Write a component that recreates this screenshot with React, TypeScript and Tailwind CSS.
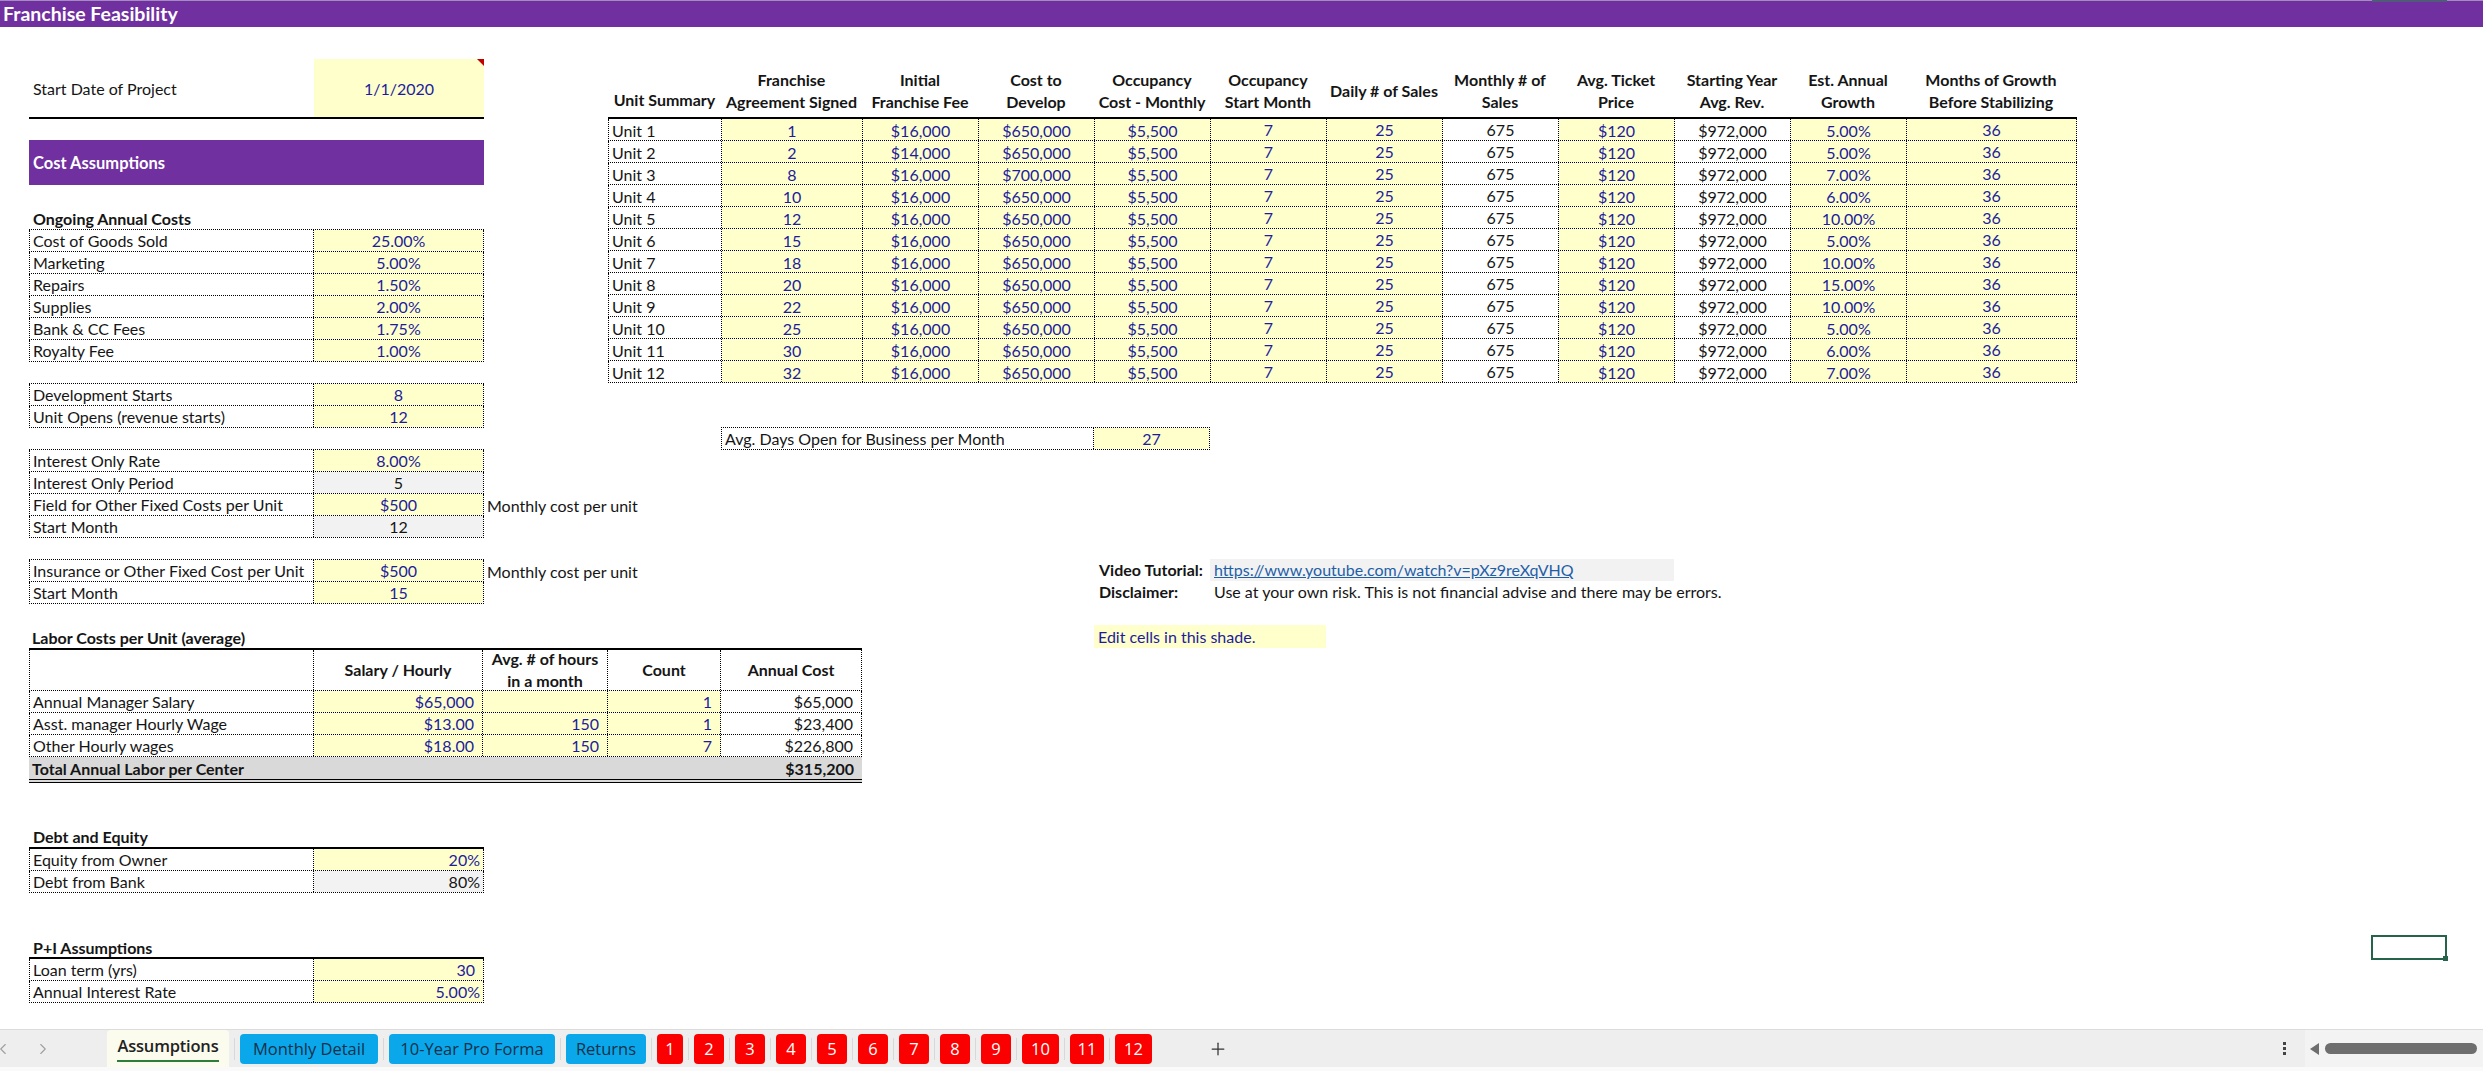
import type { ReactNode } from 'react'
import { ChevronLeft, ChevronRight, Plus } from 'lucide-react'

const blue = 'text-[#1c1c9c]'

function Row({ label, value, kind = 'input', align = 'center', note }: { label: string; value: ReactNode; kind?: 'input' | 'calc'; align?: 'center' | 'right'; note?: string }) {
  return (
    <div className="flex h-[22px]">
      <div className="flex w-[455px] shrink-0 border-x border-b border-dotted border-black">
        <div className="flex w-[284px] shrink-0 items-center border-r border-dotted border-black pt-px pl-[3px]">{label}</div>
        <div
          className={`flex flex-1 items-center pt-px ${align === 'right' ? 'justify-end pr-[3px]' : 'justify-center'} ${
            kind === 'input' ? `bg-[#ffffcc] ${blue}` : 'bg-[#f2f2f2]'
          }`}
        >
          {value}
        </div>
      </div>
      {note && <span className="flex items-center pt-px pl-[3px] whitespace-nowrap">{note}</span>}
    </div>
  )
}

function Block({ className = '', children }: { className?: string; children: ReactNode }) {
  return <div className={`w-[455px] border-t border-dotted border-black ${className}`}>{children}</div>
}

const units = [
  ['Unit 1', '1', '$16,000', '$650,000', '5.00%'],
  ['Unit 2', '2', '$14,000', '$650,000', '5.00%'],
  ['Unit 3', '8', '$16,000', '$700,000', '7.00%'],
  ['Unit 4', '10', '$16,000', '$650,000', '6.00%'],
  ['Unit 5', '12', '$16,000', '$650,000', '10.00%'],
  ['Unit 6', '15', '$16,000', '$650,000', '5.00%'],
  ['Unit 7', '18', '$16,000', '$650,000', '10.00%'],
  ['Unit 8', '20', '$16,000', '$650,000', '15.00%'],
  ['Unit 9', '22', '$16,000', '$650,000', '10.00%'],
  ['Unit 10', '25', '$16,000', '$650,000', '5.00%'],
  ['Unit 11', '30', '$16,000', '$650,000', '6.00%'],
  ['Unit 12', '32', '$16,000', '$650,000', '7.00%'],
]

const headers = [
  { w: 'w-[113px]', lines: ['', 'Unit Summary'] },
  { w: 'w-[141px]', lines: ['Franchise', 'Agreement Signed'] },
  { w: 'w-[116px]', lines: ['Initial', 'Franchise Fee'] },
  { w: 'w-[116px]', lines: ['Cost to', 'Develop'] },
  { w: 'w-[116px]', lines: ['Occupancy', 'Cost - Monthly'] },
  { w: 'w-[116px]', lines: ['Occupancy', 'Start Month'] },
  { w: 'w-[116px]', lines: ['Daily # of Sales'] },
  { w: 'w-[116px]', lines: ['Monthly # of', 'Sales'] },
  { w: 'w-[116px]', lines: ['Avg. Ticket', 'Price'] },
  { w: 'w-[116px]', lines: ['Starting Year', 'Avg. Rev.'] },
  { w: 'w-[116px]', lines: ['Est. Annual', 'Growth'] },
  { w: 'w-[170px]', lines: ['Months of Growth', 'Before Stabilizing'] },
]

function Cell({ w, input, up, children }: { w: string; input?: boolean; up?: boolean; children: ReactNode }) {
  return (
    <div
      className={`flex ${w} shrink-0 items-center justify-center border-r border-dotted border-black ${up ? '' : 'pt-[2px]'} ${
        input ? `bg-[#ffffcc] ${blue}` : ''
      }`}
    >
      {children}
    </div>
  )
}

function UnitTable() {
  return (
    <div className="mt-[43px] w-[1469px]">
      <div className="flex h-[49px] border-b-2 border-black font-bold">
        {headers.map((h, i) => (
          <div key={i} className={`flex ${h.w} shrink-0 flex-col items-center justify-center pb-[6px] whitespace-nowrap`}>
            {h.lines.map((l, j) => (
              <div key={j} className="h-[22px] leading-[22px]">
                {l}
              </div>
            ))}
          </div>
        ))}
      </div>
      {units.map(u => (
        <div key={u[0]} className="flex h-[22px] border-b border-l border-dotted border-black">
          <div className="flex w-[113px] shrink-0 items-center border-r border-dotted border-black pt-[2px] pl-[3px]">{u[0]}</div>
          <Cell w="w-[141px]" input>{u[1]}</Cell>
          <Cell w="w-[116px]" input>{u[2]}</Cell>
          <Cell w="w-[116px]" input>{u[3]}</Cell>
          <Cell w="w-[116px]" input>$5,500</Cell>
          <Cell w="w-[116px]" input up>7</Cell>
          <Cell w="w-[116px]" input up>25</Cell>
          <Cell w="w-[116px]" up>675</Cell>
          <Cell w="w-[116px]" input>$120</Cell>
          <Cell w="w-[116px]">$972,000</Cell>
          <Cell w="w-[116px]" input>{u[4]}</Cell>
          <Cell w="w-[170px]" input up>36</Cell>
        </div>
      ))}
    </div>
  )
}

const laborCols = ['w-[284px]', 'w-[169px]', 'w-[125px]', 'w-[113px]', 'w-[142px]']

const laborRows = [
  ['Annual Manager Salary', '$65,000', '', '1', '$65,000'],
  ['Asst. manager Hourly Wage', '$13.00', '150', '1', '$23,400'],
  ['Other Hourly wages', '$18.00', '150', '7', '$226,800'],
]

function LaborTable() {
  return (
    <div className="w-[833px]">
      <div className="flex h-[23px] items-center border-b-2 border-black pl-[3px] font-bold">Labor Costs per Unit (average)</div>
      <div className="flex h-[41px] border-x border-b border-dotted border-black font-bold">
        <div className={`${laborCols[0]} shrink-0 border-r border-dotted border-black`} />
        <div className={`flex ${laborCols[1]} shrink-0 items-center justify-center border-r border-dotted border-black`}>Salary / Hourly</div>
        <div className={`flex ${laborCols[2]} shrink-0 flex-col items-center justify-center border-r border-dotted border-black leading-[22px] whitespace-nowrap`}>
          <span>Avg. # of hours</span>
          <span>in a month</span>
        </div>
        <div className={`flex ${laborCols[3]} shrink-0 items-center justify-center border-r border-dotted border-black`}>Count</div>
        <div className="flex flex-1 items-center justify-center">Annual Cost</div>
      </div>
      {laborRows.map(r => (
        <div key={r[0]} className="flex h-[22px] border-x border-b border-dotted border-black">
          <div className={`flex ${laborCols[0]} shrink-0 items-center border-r border-dotted border-black pt-px pl-[3px]`}>{r[0]}</div>
          {[1, 2, 3].map(i => (
            <div key={i} className={`flex ${laborCols[i]} shrink-0 items-center justify-end border-r border-dotted border-black bg-[#ffffcc] pt-px pr-[8px] ${blue}`}>
              {r[i]}
            </div>
          ))}
          <div className="flex flex-1 items-center justify-end pt-px pr-[8px]">{r[4]}</div>
        </div>
      ))}
      <div className="flex h-[26px] items-start justify-between border-b-[4px] border-double border-black bg-[#d9d9d9] pt-px font-bold">
        <span className="flex h-[22px] items-center pl-[3px]">Total Annual Labor per Center</span>
        <span className="flex h-[22px] items-center pr-[8px]">$315,200</span>
      </div>
    </div>
  )
}

const tabs = [
  { name: 'Monthly Detail', w: 'w-[138px]', color: 'bg-[#0aa8ea] text-[#14304a]' },
  { name: '10-Year Pro Forma', w: 'w-[166px]', color: 'bg-[#0aa8ea] text-[#14304a]' },
  { name: 'Returns', w: 'w-[80px]', color: 'bg-[#0aa8ea] text-[#14304a]' },
  { name: '1', w: 'w-[26px]', color: 'bg-[#fb0000] text-white' },
  { name: '2', w: 'w-[30px]', color: 'bg-[#fb0000] text-white' },
  { name: '3', w: 'w-[30px]', color: 'bg-[#fb0000] text-white' },
  { name: '4', w: 'w-[30px]', color: 'bg-[#fb0000] text-white' },
  { name: '5', w: 'w-[30px]', color: 'bg-[#fb0000] text-white' },
  { name: '6', w: 'w-[30px]', color: 'bg-[#fb0000] text-white' },
  { name: '7', w: 'w-[30px]', color: 'bg-[#fb0000] text-white' },
  { name: '8', w: 'w-[30px]', color: 'bg-[#fb0000] text-white' },
  { name: '9', w: 'w-[30px]', color: 'bg-[#fb0000] text-white' },
  { name: '10', w: 'w-[37px]', color: 'bg-[#fb0000] text-white' },
  { name: '11', w: 'w-[34px]', color: 'bg-[#fb0000] text-white' },
  { name: '12', w: 'w-[37px]', color: 'bg-[#fb0000] text-white' },
]

function TabBar() {
  return (
    <div className="flex h-[38px] shrink-0 items-start border-t border-[#dcdcdc] bg-[#eeeeee] font-['Open_Sans',sans-serif] text-[16.5px]">
      <div className="flex h-full w-[107px] shrink-0 items-center text-[#a0a0a0]">
        <ChevronLeft className="ml-[-6px] h-[18px] w-[18px]" strokeWidth={1.5} />
        <ChevronRight className="ml-[22px] h-[18px] w-[18px]" strokeWidth={1.5} />
      </div>
      <div className="relative h-[37px] w-[122px] shrink-0 rounded-t-[4px] bg-[#fbfbee] pt-[4px] text-center text-[16.5px] font-semibold tracking-[-0.2px] text-[#222]">
        Assumptions
        <div className="absolute bottom-[5px] left-[10px] h-[2px] w-[102px] bg-[#2f7d3b]" />
      </div>
      <div className="flex items-center pt-[4px]">
        {tabs.map(t => (
          <div key={t.name} className="flex items-center">
            <span className="mx-[5px] h-[22px] w-px bg-[#d8d8d8]" />
            <div className={`flex h-[30px] ${t.w} items-center justify-center rounded-[4px] ${t.color} whitespace-nowrap`}>{t.name}</div>
          </div>
        ))}
      </div>
      <div className="flex h-full items-center pl-[56px] text-[#333]">
        <Plus className="h-[20px] w-[20px]" strokeWidth={1.5} />
      </div>
      <div className="flex-1" />
      <div className="flex h-full w-[22px] flex-col items-center justify-center gap-[2px]">
        <span className="h-[3px] w-[3px] bg-[#444]" />
        <span className="h-[3px] w-[3px] bg-[#444]" />
        <span className="h-[3px] w-[3px] bg-[#444]" />
      </div>
      <div className="ml-[10px] flex h-full w-[178px] items-center bg-[#f3f3f3] pl-[5px]">
        <svg width="9" height="12" viewBox="0 0 9 12" className="shrink-0">
          <polygon points="9,0 9,12 0,6" fill="#6e6e6e" />
        </svg>
        <div className="ml-[6px] h-[11px] w-[152px] rounded-full bg-[#6e6e6e]" />
      </div>
    </div>
  )
}

export default function App() {
  return (
    <div className="relative flex h-[1071px] w-[2483px] flex-col overflow-hidden bg-white font-['Lato',sans-serif] text-[16px] text-[#151515]">
      <div className="h-px shrink-0 bg-[#a48cc0]" />
      <div className="flex h-[26px] shrink-0 items-center bg-[#7030a0] pl-[3px] text-[19.5px] font-bold text-white">Franchise Feasibility</div>

      <div className="flex flex-1">
        {/* left column: assumptions blocks */}
        <div className="ml-[29px] w-[579px] shrink-0">
          <div className="relative mt-[32px] flex h-[60px] w-[455px] border-b-2 border-black">
            <div className="flex w-[285px] items-center pt-px pl-[4px]">Start Date of Project</div>
            <div className={`flex flex-1 items-center justify-center pt-px bg-[#ffffcc] ${blue}`}>1/1/2020</div>
            <svg width="7" height="7" viewBox="0 0 7 7" className="absolute top-0 right-0">
              <polygon points="0,0 7,0 7,7" fill="#c00000" />
            </svg>
          </div>
          <div className="mt-[21px] flex h-[45px] w-[455px] items-center bg-[#7030a0] pt-[2px] pl-[4px] text-[16.5px] font-bold text-white">Cost Assumptions</div>
          <div className="mt-[22px] flex h-[22px] items-center pt-px pl-[4px] font-bold">Ongoing Annual Costs</div>
          <Block>
            <Row label="Cost of Goods Sold" value="25.00%" />
            <Row label="Marketing" value="5.00%" />
            <Row label="Repairs" value="1.50%" />
            <Row label="Supplies" value="2.00%" />
            <Row label="Bank & CC Fees" value="1.75%" />
            <Row label="Royalty Fee" value="1.00%" />
          </Block>
          <Block className="mt-[21px]">
            <Row label="Development Starts" value="8" />
            <Row label="Unit Opens (revenue starts)" value="12" />
          </Block>
          <Block className="mt-[21px]">
            <Row label="Interest Only Rate" value="8.00%" />
            <Row label="Interest Only Period" value="5" kind="calc" />
            <Row label="Field for Other Fixed Costs per Unit" value="$500" note="Monthly cost per unit" />
            <Row label="Start Month" value="12" kind="calc" />
          </Block>
          <Block className="mt-[21px]">
            <Row label="Insurance or Other Fixed Cost per Unit" value="$500" note="Monthly cost per unit" />
            <Row label="Start Month" value="15" />
          </Block>
          <div className="mt-[23px]">
            <LaborTable />
          </div>
          <div className="mt-[42px] flex h-[24px] w-[455px] items-center border-b-2 border-black pt-[2px] pl-[4px] font-bold">Debt and Equity</div>
          <Row label="Equity from Owner" value="20%" align="right" />
          <Row label="Debt from Bank" value="80%" kind="calc" align="right" />
          <div className="mt-[42px] flex h-[24px] w-[455px] items-center border-b-2 border-black pt-[3px] pl-[4px] font-bold">P+I Assumptions</div>
          <Row label="Loan term (yrs)" value={<span className="pr-[5px]">30</span>} align="right" />
          <Row label="Annual Interest Rate" value="5.00%" align="right" />
        </div>

        {/* right column: unit summary and notes */}
        <div className="min-w-0 flex-1">
          <UnitTable />
          <div className="mt-[44px] ml-[113px] flex h-[23px] w-[489px] border border-dotted border-black">
            <div className="flex w-[372px] items-center border-r border-dotted border-black pl-[3px]">Avg. Days Open for Business per Month</div>
            <div className={`flex flex-1 items-center justify-center bg-[#ffffcc] ${blue}`}>27</div>
          </div>
          <div className="mt-[109px] ml-[486px]">
            <div className="flex h-[22px] items-center">
              <div className="w-[116px] pl-[5px] font-bold">Video Tutorial:</div>
              <div className="flex h-full w-[464px] items-center bg-[#f2f2f2] pl-[4px] text-[#1f5fa8] underline">https://www.youtube.com/watch?v=pXz9reXqVHQ</div>
            </div>
            <div className="flex h-[22px] items-center whitespace-nowrap">
              <div className="w-[116px] pl-[5px] font-bold">Disclaimer:</div>
              <div className="pl-[4px]">Use at your own risk. This is not financial advise and there may be errors.</div>
            </div>
            <div className={`mt-[22px] flex h-[23px] w-[232px] items-center bg-[#ffffcc] pl-[4px] ${blue}`}>Edit cells in this shade.</div>
          </div>
        </div>
      </div>

      <TabBar />
      <div className="h-[4px] shrink-0 bg-[#fafafa]" />

      {/* selected cell and its column header peeking over the title bar */}
      <div className="absolute top-0 left-[2372px] h-[2px] w-[75px] bg-[#4f5b78]" />
      <div className="absolute top-[935px] left-[2371px] h-[25px] w-[76px] border-2 border-[#25634a]">
        <div className="absolute -right-[3px] -bottom-[3px] h-[5px] w-[5px] bg-[#25634a]" />
      </div>
    </div>
  )
}
